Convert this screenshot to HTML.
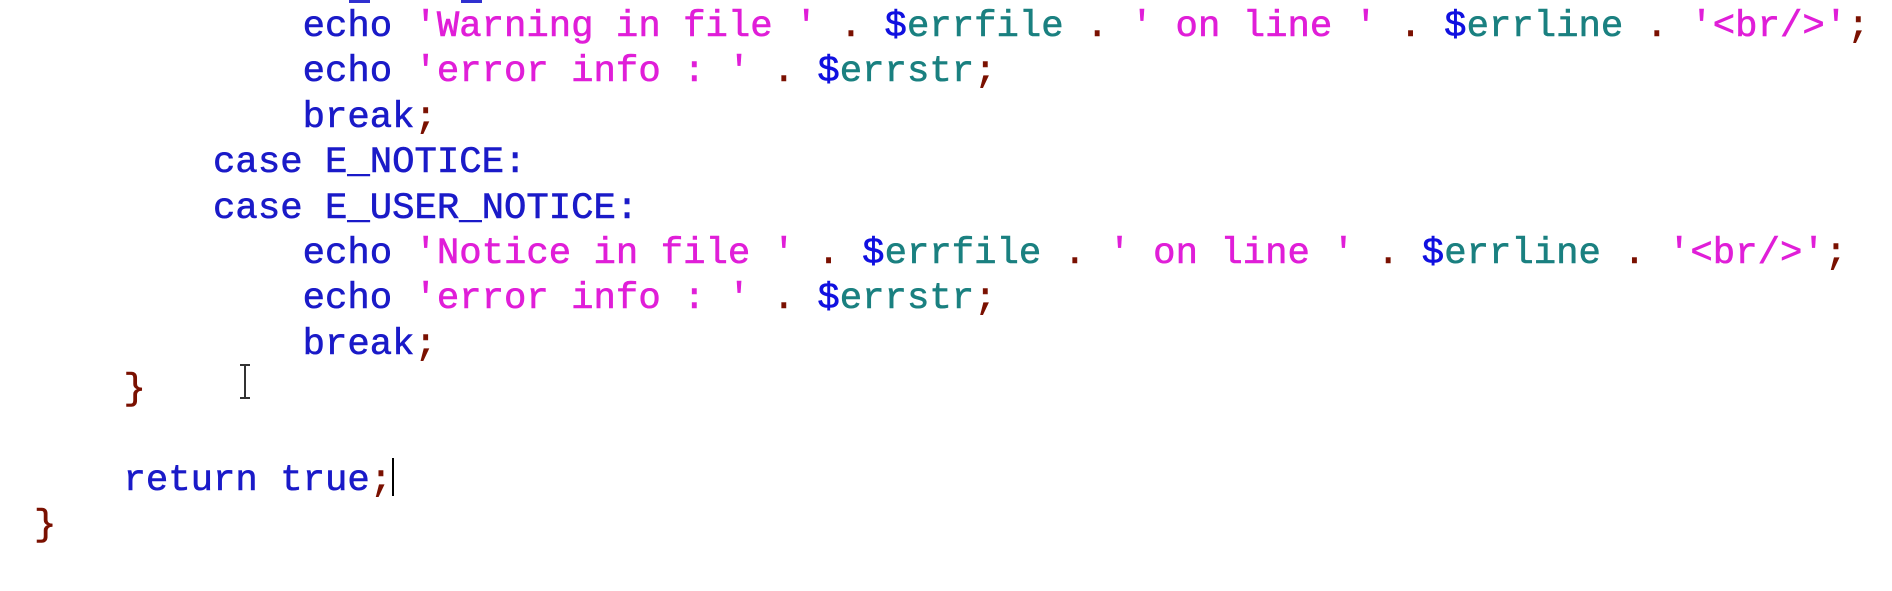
<!DOCTYPE html>
<html><head><meta charset="utf-8"><style>
html,body{margin:0;padding:0;background:#fff;width:1892px;height:591px;overflow:hidden;position:relative}
pre{position:absolute;left:34px;top:5px;margin:0;font-family:"Liberation Mono",monospace;font-size:37.3px;line-height:45.4px;color:#1010c0;-webkit-text-stroke:0.6px currentColor;}
.k{color:#1a1ac8}.s{color:#e01ed8}.v{color:#1a8080}.d{color:#1010e0}.p{color:#7a1000}
.bar{position:absolute;height:3px;background:#3030d0;top:0}
</style></head><body>
<div class="bar" style="left:349px;width:21px"></div>
<div class="bar" style="left:461px;width:21px"></div>
<pre><span class="k">            echo</span> <span class="s">'Warning in file '</span> <span class="p">.</span> <span class="d">$</span><span class="v">errfile</span> <span class="p">.</span> <span class="s">' on line '</span> <span class="p">.</span> <span class="d">$</span><span class="v">errline</span> <span class="p">.</span> <span class="s">'&lt;br/&gt;'</span><span class="p">;</span>
<span class="k">            echo</span> <span class="s">'error info : '</span> <span class="p">.</span> <span class="d">$</span><span class="v">errstr</span><span class="p">;</span>
<span class="k">            break</span><span class="p">;</span>
<span class="k">        case E_NOTICE:</span>
<span class="k">        case E_USER_NOTICE:</span>
<span class="k">            echo</span> <span class="s">'Notice in file '</span> <span class="p">.</span> <span class="d">$</span><span class="v">errfile</span> <span class="p">.</span> <span class="s">' on line '</span> <span class="p">.</span> <span class="d">$</span><span class="v">errline</span> <span class="p">.</span> <span class="s">'&lt;br/&gt;'</span><span class="p">;</span>
<span class="k">            echo</span> <span class="s">'error info : '</span> <span class="p">.</span> <span class="d">$</span><span class="v">errstr</span><span class="p">;</span>
<span class="k">            break</span><span class="p">;</span>
<span class="p">    }</span>

<span class="k">    return true</span><span class="p">;</span>
<span class="p">}</span></pre>
<svg style="position:absolute;left:238px;top:364px" width="14" height="36"><path d="M2 1h10M7 1v33M2 34h10" stroke="#333" stroke-width="2" fill="none"/></svg>
<div style="position:absolute;left:392px;top:458px;width:2px;height:38px;background:#000"></div>
</body></html>
